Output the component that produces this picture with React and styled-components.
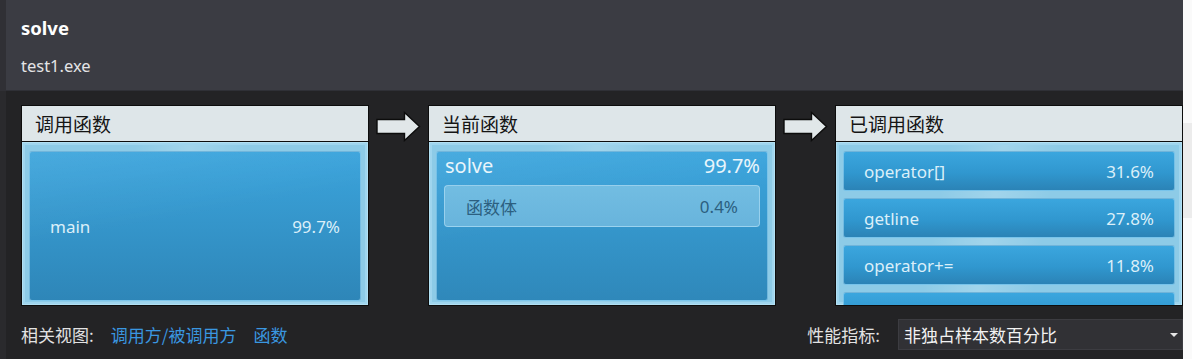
import React from 'react';
import styled, { createGlobalStyle } from 'styled-components';

const GlobalStyle = createGlobalStyle`
    html, body {
        margin: 0;
        padding: 0;
        background: #f7f7f7;
    }
    body {
        font-family: "Noto Sans", "Noto Sans CJK SC", sans-serif;
    }
`;

const callers = [{ name: 'main', value: '99.7%' }];

const callees = [
    { name: 'operator[]', value: '31.6%' },
    { name: 'getline', value: '27.8%' },
    { name: 'operator+=', value: '11.8%' },
    { name: '', value: '' }
];

function Arrow () {
    return (
        <ArrowSlot>
            <svg width="45" height="31" viewBox="0 0 45 31">
                <path
                    d="M1 8.5 H28.5 V1.5 L43.5 15.5 L28.5 29.5 V22.5 H1 Z"
                    fill="#e1e7e9"
                    stroke="#0c0c0c"
                    strokeWidth="1.4"
                    strokeLinejoin="miter"
                />
            </svg>
        </ArrowSlot>
    );
}

export default function App () {
    return (
        <Page>
            <GlobalStyle />
            <LeftEdge />
            <Main>
                <Header>
                    <Title>solve</Title>
                    <Subtitle>test1.exe</Subtitle>
                </Header>
                <Content>
                    <PanelRow>
                        <Panel>
                            <PanelHead>调用函数</PanelHead>
                            <PanelBody>
                                {callers.map((c) => (
                                    <BigBox key={c.name}>
                                        <Name>{c.name}</Name>
                                        <Value>{c.value}</Value>
                                    </BigBox>
                                ))}
                            </PanelBody>
                        </Panel>
                        <Arrow />
                        <Panel>
                            <PanelHead>当前函数</PanelHead>
                            <PanelBody>
                                <CurrentBox>
                                    <CurrentTop>
                                        <span>solve</span>
                                        <span>99.7%</span>
                                    </CurrentTop>
                                    <BodyBox>
                                        <span>函数体</span>
                                        <span>0.4%</span>
                                    </BodyBox>
                                </CurrentBox>
                            </PanelBody>
                        </Panel>
                        <Arrow />
                        <Panel>
                            <PanelHead>已调用函数</PanelHead>
                            <PanelBody>
                                <RowList>
                                    {callees.map((c, i) => (
                                        <Row key={i}>
                                            <Name>{c.name}</Name>
                                            <Value>{c.value}</Value>
                                        </Row>
                                    ))}
                                </RowList>
                            </PanelBody>
                        </Panel>
                    </PanelRow>
                    <BottomBar>
                        <Group>
                            <Label>相关视图:</Label>
                            <Link>调用方/被调用方</Link>
                            <Link>函数</Link>
                        </Group>
                        <Group>
                            <Label>性能指标:</Label>
                            <Select>
                                <span>非独占样本数百分比</span>
                                <Caret />
                            </Select>
                        </Group>
                    </BottomBar>
                </Content>
            </Main>
            <RightEdge>
                <RightBlock />
            </RightEdge>
        </Page>
    );
}

const Page = styled.div`
    display: flex;
    width: 1192px;
    height: 359px;
    overflow: hidden;
`;

const LeftEdge = styled.div`
    width: 6px;
    flex: none;
    background: linear-gradient(to bottom, #303035 0 91px, #2a2a2d 91px);
`;

const Main = styled.div`
    width: 1177px;
    flex: none;
    display: flex;
    flex-direction: column;
    overflow: hidden;
`;

const Header = styled.div`
    height: 91px;
    box-sizing: border-box;
    padding: 15px 0 0 15px;
    background: #3b3c43;
    border-bottom: 1px solid #2f3036;
`;

const Title = styled.div`
    font-size: 18.5px;
    font-weight: 700;
    color: #ffffff;
    line-height: 26px;
`;

const Subtitle = styled.div`
    margin-top: 12px;
    font-size: 16.5px;
    color: #e4e4e6;
    line-height: 26px;
`;

const Content = styled.div`
    flex: 1;
    background: #232325;
    padding: 14px 0 0 15px;
`;

const PanelRow = styled.div`
    display: flex;
    align-items: flex-start;
`;

const ArrowSlot = styled.div`
    width: 59px;
    flex: none;
    display: flex;
    justify-content: center;
    padding-top: 6px;
`;

const Panel = styled.div`
    width: 348px;
    height: 201px;
    flex: none;
    box-sizing: border-box;
    border: 1px solid #0d0d0d;
    display: flex;
    flex-direction: column;
`;

const PanelHead = styled.div`
    height: 36px;
    flex: none;
    box-sizing: border-box;
    border-bottom: 1.5px solid #0d0d0d;
    background: #dee6e9;
    color: #151515;
    font-family: "Noto Sans CJK SC", sans-serif;
    font-size: 19px;
    line-height: 36px;
    padding-left: 13px;
`;

const PanelBody = styled.div`
    flex: 1;
    min-height: 0;
    overflow: hidden;
    padding: 9px 7px 4px 7px;
    background:
        linear-gradient(100deg, rgba(255,255,255,0) 30%, rgba(255,255,255,0.18) 45%, rgba(255,255,255,0) 60%),
        #8dcbe7;
    box-shadow: inset 0 0 0 1px #b2e0f3, inset 0 0 0 3px #9fd5ee;
    display: flex;
    flex-direction: column;
`;

const blueFill = `
    border-radius: 3px;
    border: 1px solid rgba(170, 220, 245, 0.55);
    color: #dbeff9;
    box-sizing: border-box;
`;

const BigBox = styled.div`
    ${blueFill}
    flex: 1;
    display: flex;
    align-items: center;
    justify-content: space-between;
    padding: 0 20px;
    font-size: 17px;
    background:
        linear-gradient(170deg, rgba(255,255,255,0.07) 0%, rgba(255,255,255,0) 45%),
        linear-gradient(to bottom, #3ba4dc, #2e86b8);
`;

const Name = styled.span`
    font-size: 17px;
`;

const Value = styled.span`
    font-size: 17px;
`;

const CurrentBox = styled.div`
    ${blueFill}
    flex: 1;
    padding: 1px 7px 0 7px;
    background:
        linear-gradient(170deg, rgba(255,255,255,0.07) 0%, rgba(255,255,255,0) 45%),
        linear-gradient(to bottom, #3ba5dd, #2f88ba);
`;

const CurrentTop = styled.div`
    display: flex;
    justify-content: space-between;
    font-size: 20px;
    line-height: 26px;
    color: #e9f5fb;
    padding: 0 0 0 1px;
`;

const BodyBox = styled.div`
    margin-top: 6px;
    height: 42px;
    box-sizing: border-box;
    border-radius: 4px;
    border: 1px solid rgba(190, 230, 250, 0.55);
    background: linear-gradient(to bottom, #72bde2, #68b4dc);
    display: flex;
    align-items: center;
    justify-content: space-between;
    padding: 0 21px 0 21px;
    color: #2c5f80;
    font-size: 17px;
`;

const RowList = styled.div`
    display: flex;
    flex-direction: column;
    gap: 7px;
`;

const Row = styled.div`
    ${blueFill}
    height: 40px;
    flex: none;
    display: flex;
    align-items: center;
    justify-content: space-between;
    padding: 0 20px 0 20px;
    background: linear-gradient(to bottom, #3ba6de 0%, #3097cf 55%, #2b83b6 100%);
`;

const BottomBar = styled.div`
    margin-top: 13px;
    height: 31px;
    display: flex;
    align-items: center;
    justify-content: space-between;
`;

const Group = styled.div`
    display: flex;
    align-items: center;
    gap: 17px;
    font-family: "Noto Sans CJK SC", sans-serif;
    font-size: 17px;
`;

const Label = styled.span`
    color: #e2e2e2;
`;

const Link = styled.span`
    color: #3a97e0;
`;

const Select = styled.div`
    width: 285px;
    height: 31px;
    box-sizing: border-box;
    border: 1px solid #3c3c41;
    background: #313135;
    color: #f2f2f2;
    display: flex;
    align-items: center;
    justify-content: space-between;
    padding: 0 4px 0 5px;
    margin-left: 1px;
`;

const Caret = styled.span`
    width: 0;
    height: 0;
    border-left: 4px solid transparent;
    border-right: 4px solid transparent;
    border-top: 4px solid #e6e6e6;
`;

const RightEdge = styled.div`
    flex: 1;
    background: #fafafa;
    padding-top: 123px;
`;

const RightBlock = styled.div`
    height: 95px;
    background: #ececec;
`;
